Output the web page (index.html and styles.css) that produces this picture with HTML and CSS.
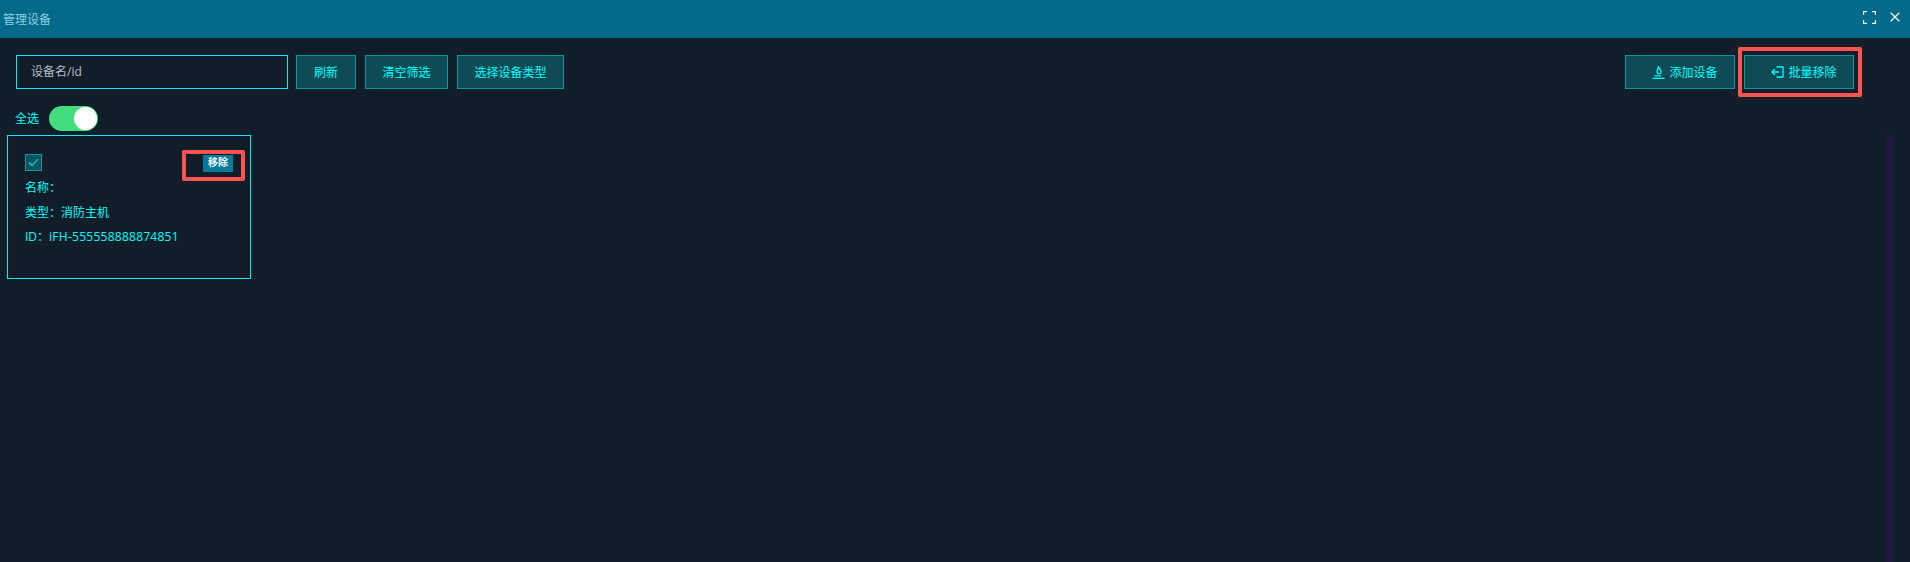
FILE: index.html
```html
<!DOCTYPE html>
<html lang="zh-CN">
<head>
<meta charset="utf-8">
<title>管理设备</title>
<link rel="stylesheet" href="styles.css">
</head>
<body>
<div class="dialog">
  <header class="titlebar">
    <span class="title">管理设备</span>
    <div class="win-actions">
      <svg class="win-icon" viewBox="0 0 13 13" width="13" height="13"><path d="M.5 4V.5H4M9 .5h3.5V4M12.5 9v3.5H9M4 12.500H.5V9" fill="none" stroke="#e8f6fa" stroke-width="1.3"/></svg>
      <svg class="win-icon" viewBox="0 0 10 10" width="10" height="10"><path d="M.7.7l8.6 8.6M9.3.7L.7 9.3" fill="none" stroke="#f2fbfd" stroke-width="1.3"/></svg>
    </div>
  </header>
  <section class="toolbar">
    <div class="search">设备名/id</div>
    <button class="btn btn-refresh">刷新</button>
    <button class="btn btn-clear">清空筛选</button>
    <button class="btn btn-type">选择设备类型</button>
    <div class="spacer"></div>
    <button class="btn btn-wide">
      <svg viewBox="0 0 13 13" width="13" height="13"><path d="M.5 12.300h12M2.500 9.800h6.500M6.500.8c-.6 1.800-1.300 3-1.300 4.600 0 1.500.8 2.500 1.800 2.500 1.300 0 2.300-1.200 1.900-2.600C8.600 4 7.300 3 6.500.8z" fill="none" stroke="#00ffff" stroke-width="1.3"/></svg>
      添加设备
    </button>
    <div class="marked">
      <button class="btn btn-wide btn-batch">
        <svg viewBox="0 0 13 12" width="13" height="12"><path d="M5.500 1H12v10H5.500M8 6H1M3.800 3L1 6l2.800 3" fill="none" stroke="#00ffff" stroke-width="1.3"/></svg>
        批量移除
      </button>
      <span class="mark mark-batch"></span>
    </div>
  </section>
  <div class="select-all">
    <span class="select-label">全选</span>
    <span class="switch"><span class="knob"></span></span>
  </div>
  <section class="content">
    <article class="card">
      <div class="card-head">
        <span class="check">
          <svg viewBox="0 0 11 9" width="11" height="9"><path d="M1 4.500l3 3 6-6.500" fill="none" stroke="#00e8e8" stroke-width="1.100"/></svg>
        </span>
        <div class="marked">
          <button class="remove">移除</button>
          <span class="mark mark-remove"></span>
        </div>
      </div>
      <p class="line">名称&#xFF1A;</p>
      <p class="line">类型&#xFF1A;消防主机</p>
      <p class="line">ID&#xFF1A;<span class="device-id">iFH-555558888874851</span></p>
    </article>
    <div class="track"></div>
  </section>
</div>
</body>
</html>
```
FILE: styles.css
```css
* { box-sizing: border-box; }
html, body { margin: 0; height: 100%; }
body {
  background: #111e2a;
  font-family: "Open Sans", "Noto Sans CJK SC", sans-serif;
  font-size: 12px;
  color: #00ffff;
  overflow: hidden;
}
.dialog { height: 100%; display: flex; flex-direction: column; }
.titlebar {
  height: 38px;
  flex: none;
  background: #05698a;
  display: flex;
  align-items: center;
  justify-content: space-between;
  padding: 0 10px 0 3px;
}
.title { font-size: 12px; color: #8fd0e6; }
.win-actions { display: flex; align-items: center; gap: 14px; margin-bottom: 4px; }
.win-icon { display: block; }
.toolbar {
  margin-top: 17px;
  height: 34px;
  flex: none;
  display: flex;
  padding: 0 56px 0 16px;
}
.search {
  width: 272px;
  height: 34px;
  border: 1px solid #00f0f5;
  padding: 0 0 2px 14px;
  display: flex;
  align-items: center;
  color: #b8bfc4;
  font-size: 12px;
}
.btn {
  height: 34px;
  border: 1px solid #069aa0;
  background: #0f4b54;
  color: #00ffff;
  font-family: inherit;
  font-size: 12px;
  padding: 0;
  display: flex;
  align-items: center;
  justify-content: center;
}
.btn-refresh { width: 60px; margin-left: 8px; }
.btn-clear { width: 83px; margin-left: 9px; }
.btn-type { width: 107px; margin-left: 9px; }
.spacer { flex: 1; }
.btn-wide { width: 110px; gap: 4px; padding-left: 10px; }
.marked { position: relative; }
.toolbar .marked { margin-left: 9px; }
.mark {
  position: absolute;
  border: 4px solid #ff5252;
  border-radius: 2px;
  pointer-events: none;
}
.mark-batch { left: -6px; right: -8px; top: -8px; bottom: -8px; }
.mark-remove { left: -21px; right: -12px; top: -4px; bottom: -9px; }
.select-all {
  margin-top: 17px;
  height: 25px;
  flex: none;
  padding-left: 15px;
  display: flex;
  align-items: center;
  gap: 10px;
}
.select-label { font-size: 12px; margin-bottom: 2px; }
.switch {
  width: 49px;
  height: 25px;
  border-radius: 13px;
  background: #41dd7f;
  display: flex;
  justify-content: flex-end;
  align-items: center;
  padding-right: 1px;
}
.knob { width: 23px; height: 23px; border-radius: 50%; background: #fff; }
.content {
  margin-top: 4px;
  flex: 1;
  display: flex;
  justify-content: space-between;
  align-items: flex-start;
  padding: 0 16px 0 7px;
  min-height: 0;
}
.card {
  width: 244px;
  height: 144px;
  border: 1px solid #00f0f5;
  padding: 18px 17px 0;
}
.card-head { display: flex; justify-content: space-between; align-items: flex-start; height: 22px; }
.check {
  width: 17px;
  height: 17px;
  border: 1px solid #069aa0;
  background: #0b5560;
  display: flex;
  align-items: center;
  justify-content: center;
}
.remove {
  display: block;
  width: 30px;
  height: 17px;
  margin-top: 1px;
  border: 0;
  padding: 0 0 2px;
  background: #067a9c;
  color: #f4fbfd;
  font-family: inherit;
  font-size: 10px;
  font-weight: 700;
  line-height: 13px;
}
.line { margin: 0; height: 24.5px; line-height: 24.5px; white-space: nowrap; }
.device-id { letter-spacing: .26px; }
.track { width: 9px; height: 100%; background: #1a1c40; }
```
